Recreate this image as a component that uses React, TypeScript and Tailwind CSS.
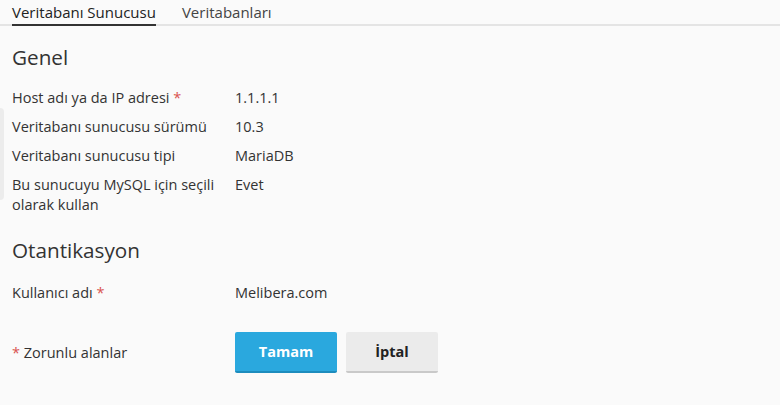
export default function App() {
  const rows: { label: React.ReactNode; value: string }[] = [
    { label: <>Host adı ya da IP adresi <span className="text-[#d9534f]">*</span></>, value: "1.1.1.1" },
    { label: "Veritabanı sunucusu sürümü", value: "10.3" },
    { label: "Veritabanı sunucusu tipi", value: "MariaDB" },
    { label: "Bu sunucuyu MySQL için seçili olarak kullan", value: "Evet" },
  ];

  return (
    <div className="relative w-[780px] h-[405px] overflow-hidden bg-[#fafafa] text-[#333] font-['Open_Sans',sans-serif]">
      {/* left scroll hint */}
      <div className="absolute left-0 top-[108px] w-[4px] h-[92px] rounded-r bg-[#ececec]" />

      {/* Tabs */}
      <div className="flex border-b-2 border-[#e4e4e4] pl-3 gap-[26px] h-[26px]">
        <div className="text-[15px] leading-[20px] pt-[2px] border-b-2 border-[#333] mb-[-2px] text-[#222]">
          Veritabanı Sunucusu
        </div>
        <div className="text-[15px] leading-[20px] pt-[2px] text-[#444]">Veritabanları</div>
      </div>

      <div className="pl-3">
        <h2 className="mt-[17px] text-[20.7px] leading-[28px] text-[#333]">Genel</h2>

        <div className="mt-[17px] flex flex-col gap-[9px]">
          {rows.map((r, i) => (
            <div key={i} className="flex text-[14.5px] leading-[20px]">
              <div className="w-[223px] pr-[8px] text-[#333]">{r.label}</div>
              <div className="text-[#333]">{r.value}</div>
            </div>
          ))}
        </div>

        <h2 className="mt-[21px] text-[20.7px] leading-[28px] text-[#333]">Otantikasyon</h2>

        <div className="mt-[19px] flex text-[14.5px] leading-[20px]">
          <div className="w-[223px] pr-[8px]">
            Kullanıcı adı <span className="text-[#d9534f]">*</span>
          </div>
          <div>Melibera.com</div>
        </div>

        <div className="mt-[29px] flex items-center text-[14.5px]">
          <div className="w-[223px]">
            <span className="text-[#d9534f]">*</span> Zorunlu alanlar
          </div>
          <div className="flex gap-[9px]">
            <button className="w-[102px] h-[41px] rounded-[2px] bg-[#2aa8de] border-b-2 border-[#1d8cbd] text-white font-bold text-[14.5px]">
              Tamam
            </button>
            <button className="w-[92px] h-[41px] rounded-[2px] bg-[#ebebeb] border-b-2 border-[#c9c9c9] text-[#222] font-bold text-[14.5px]">
              İptal
            </button>
          </div>
        </div>
      </div>
    </div>
  );
}
